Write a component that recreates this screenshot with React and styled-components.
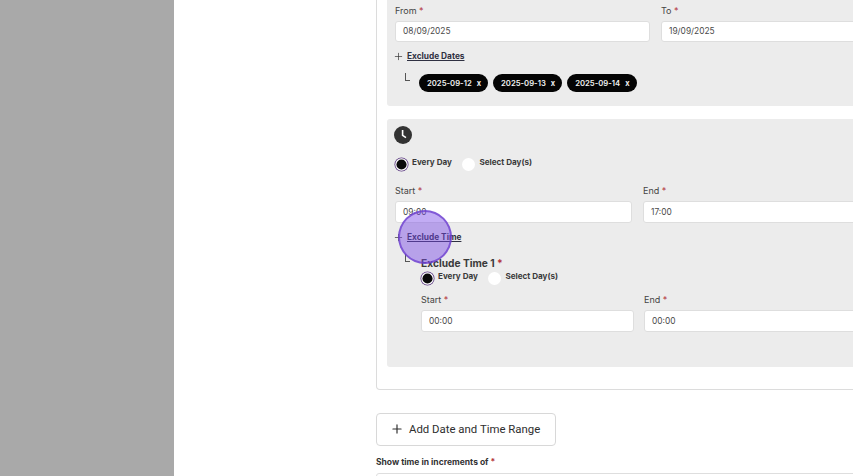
import React from "react";
import styled, { createGlobalStyle } from "styled-components";
import { Plus } from "lucide-react";

const Global = createGlobalStyle`
  html, body { margin: 0; padding: 0; background: #fff; overflow: hidden; }
  body { font-family: Inter, "Liberation Sans", sans-serif; color: #3f3f3f; }
`;

const Page = styled.div`
  position: relative;
  display: flex;
  width: 853px;
  height: 476px;
  overflow: hidden;
`;
const Sidebar = styled.aside`
  flex: 0 0 174px;
  background: #a9a9a9;
`;
const Main = styled.main`
  flex: 1;
  min-width: 0;
  padding-left: 202px;
  overflow: hidden;
`;
const Card = styled.section`
  width: 560px;
  height: 390px;
  box-sizing: border-box;
  padding: 0 0 0 10px;
  border: 1px solid #dcdcdc;
  border-top: none;
  border-radius: 0 0 0 4px;
`;
const Panel = styled.div`
  box-sizing: border-box;
  height: ${(p) => p.$height}px;
  margin-bottom: ${(p) => p.$gap || 0}px;
  padding: ${(p) => p.$top}px 8px 0;
  background: #ececec;
  border-radius: ${(p) => p.$radius};
`;
const FieldGrid = styled.div`
  display: grid;
  grid-template-columns: ${(p) => p.$first}px 1fr;
  column-gap: ${(p) => p.$gap}px;
  margin-top: ${(p) => p.$top || 0}px;
`;
const Field = styled.div`
  display: flex;
  flex-direction: column;
  min-width: 0;
`;
const Label = styled.label`
  height: 11px;
  margin-bottom: 5px;
  font-size: 9px;
  line-height: 11px;
  color: #444;
`;
const Req = styled.span`
  color: #b3323a;
`;
const Input = styled.div`
  box-sizing: border-box;
  height: ${(p) => p.$h || 22}px;
  padding-left: 7px;
  background: #fff;
  border: 1px solid #dedede;
  border-radius: 3px;
  font-size: 8.4px;
  line-height: ${(p) => (p.$h || 22) - 2}px;
  color: #4a4a4a;
`;
const ExcludeRow = styled.div`
  display: flex;
  align-items: center;
  gap: 3px;
  height: 14px;
  margin-top: ${(p) => p.$top}px;
  margin-left: -2px;
  color: #333;
`;
const ExcludeLink = styled.a`
  font-size: 8.3px;
  font-weight: 700;
  line-height: 14px;
  color: #2f3142;
  text-decoration: underline;
`;
const ChipRow = styled.div`
  display: flex;
  gap: 5px;
  margin-top: 11px;
  padding-left: 10px;
`;
const Elbow = styled.span`
  flex: 0 0 4px;
  height: 7px;
  margin: -1px 4px 0 0;
  border-left: 1px solid #555;
  border-bottom: 1px solid #555;
`;
const Chip = styled.span`
  display: flex;
  align-items: center;
  gap: 5px;
  height: 18px;
  padding: 0 7px 0 8px;
  border-radius: 9px;
  background: #050505;
  color: #f2f2f2;
  font-size: 7.7px;
  font-weight: 600;
  white-space: nowrap;
`;
const ChipX = styled.span`
  font-size: 7.5px;
  font-weight: 700;
`;
const ClockBadge = styled.svg`
  display: block;
  width: 18px;
  height: 18px;
  margin-left: -1px;
`;
const RadioRow = styled.div`
  display: flex;
  align-items: flex-start;
  height: 14px;
  margin-top: ${(p) => p.$top}px;
`;
const Radio = styled.span`
  flex: none;
  box-sizing: border-box;
  width: 13px;
  height: 13px;
  margin: 1px 4px 0 0;
  border-radius: 50%;
  background: ${(p) => (p.$on ? "#0a0a0a" : "#fff")};
  box-shadow: ${(p) => (p.$on ? "0 0 0 1.5px #fff, 0 0 0 2.5px #5c3b80" : "none")};
  transform: ${(p) => (p.$on ? "scale(.78)" : "none")};
`;
const RadioText = styled.span`
  margin: -2px ${(p) => p.$after}px 0 0;
  font-size: 8.1px;
  font-weight: 700;
  line-height: 14px;
  color: #3a3a3a;
  white-space: nowrap;
`;
const SubBlock = styled.div`
  display: flex;
`;
const SubElbow = styled(Elbow)`
  margin: 10px 11px 0 10px;
`;
const SubContent = styled.div`
  flex: 1;
  min-width: 0;
  margin-top: 13px;
`;
const SubTitle = styled.div`
  font-size: 10.2px;
  font-weight: 700;
  line-height: 13px;
  color: #3a3a3a;
`;
const AddButton = styled.button`
  display: flex;
  align-items: center;
  gap: 5px;
  box-sizing: border-box;
  width: 180px;
  height: 33px;
  margin-top: 23px;
  padding: 0 0 2px 13px;
  background: #fff;
  border: 1px solid #d8d8d8;
  border-radius: 4px;
  font-family: Roboto, sans-serif;
  font-size: 11.4px;
  color: #2e2e2e;
  white-space: nowrap;
`;
const IncrementLabel = styled.div`
  margin-top: 11px;
  font-size: 8.5px;
  font-weight: 700;
  line-height: 11px;
  color: #333;
`;
const NextInput = styled.div`
  height: 10px;
  margin-top: 5px;
  border: 1px solid #dedede;
  border-radius: 3px;
  width: 560px;
`;
const Highlight = styled.div`
  position: absolute;
  left: 398px;
  top: 210px;
  box-sizing: border-box;
  width: 54px;
  height: 54px;
  border-radius: 50%;
  border: 2px solid rgba(108, 62, 205, 0.75);
  background: rgba(120, 70, 230, 0.45);
`;

const Required = () => <Req>*</Req>;

const TextField = ({ label, value, h }) => (
  <Field>
    <Label>
      {label} <Required />
    </Label>
    <Input $h={h}>{value}</Input>
  </Field>
);

const Chips = ["2025-09-12", "2025-09-13", "2025-09-14"];

const DayChoice = ({ top }) => (
  <RadioRow $top={top}>
    <Radio $on />
    <RadioText $after={10.5}>Every Day</RadioText>
    <Radio />
    <RadioText $after={0}>Select Day(s)</RadioText>
  </RadioRow>
);

export default function App() {
  return (
    <Page>
      <Global />
      <Sidebar />
      <Main>
        <Card>
          <Panel $height={106} $gap={13} $top={5} $radius="0 0 0 3px">
            <FieldGrid $first={255} $gap={11}>
              <TextField label="From" value="08/09/2025" h={21} />
              <TextField label="To" value="19/09/2025" h={21} />
            </FieldGrid>
            <ExcludeRow $top={7}>
              <Plus size={11} strokeWidth={1.5} />
              <ExcludeLink>Exclude Dates</ExcludeLink>
            </ExcludeRow>
            <ChipRow>
              <Elbow />
              {Chips.map((c) => (
                <Chip key={c}>
                  {c} <ChipX>x</ChipX>
                </Chip>
              ))}
            </ChipRow>
          </Panel>
          <Panel $height={248} $top={7} $radius="3px">
            <ClockBadge viewBox="0 0 18 18">
              <circle cx="9" cy="9" r="9" fill="#333" />
              <path d="M8.6 4v5.4l3.4 2.2" fill="none" stroke="#fff" strokeWidth="1.6" />
            </ClockBadge>
            <DayChoice top={13} />
            <FieldGrid $first={237} $gap={11} $top={14}>
              <TextField label="Start" value="09:00" />
              <TextField label="End" value="17:00" />
            </FieldGrid>
            <ExcludeRow $top={7}>
              <Plus size={11} strokeWidth={1.5} />
              <ExcludeLink>Exclude Time</ExcludeLink>
            </ExcludeRow>
            <SubBlock>
              <SubElbow />
              <SubContent>
                <SubTitle>
                  Exclude Time 1 <Required />
                </SubTitle>
                <DayChoice top={1} />
                <FieldGrid $first={213} $gap={10} $top={9}>
                  <TextField label="Start" value="00:00" />
                  <TextField label="End" value="00:00" />
                </FieldGrid>
              </SubContent>
            </SubBlock>
          </Panel>
        </Card>
        <AddButton>
          <Plus size={14} strokeWidth={2} />
          Add Date and Time Range
        </AddButton>
        <IncrementLabel>
          Show time in increments of <Required />
        </IncrementLabel>
        <NextInput />
      </Main>
      <Highlight />
    </Page>
  );
}
